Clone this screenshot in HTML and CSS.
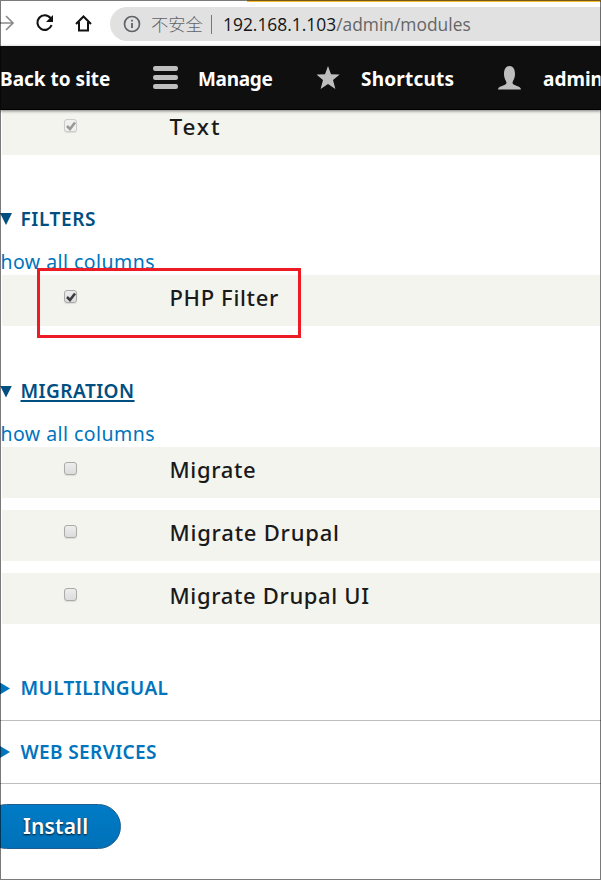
FILE: index.html
```
<!DOCTYPE html>
<html lang="en">
<head>
<meta charset="utf-8">
<title>Extend</title>
<link rel="stylesheet" href="styles.css">
</head>
<body>
<div class="window">
  <header class="browser">
    <svg class="nav-icons" width="110" height="45" viewBox="0 0 110 45" fill="none">
      <path d="M0 23H13M6 16L13 23L6 30" stroke="#8b8b8b" stroke-width="1.7"/>
      <path d="M50.5 18.1A7.300 7.300 0 1 0 51.6 25" stroke="#111" stroke-width="2.1"/>
      <path d="M53 15V22H46Z" fill="#111"/>
      <path d="M76 24L83.500 16.500L91 24M79 22V30.500H88V22" stroke="#111" stroke-width="2"/>
    </svg>
    <div class="address">
      <svg class="info" width="18" height="18" viewBox="0 0 18 18" fill="none" stroke="#5f6368">
        <circle cx="9" cy="9" r="7.500" stroke-width="1.700"/>
        <path d="M9 8V13M9 4.700V6.500" stroke-width="1.800"/>
      </svg>
      <span class="insecure">不安全</span>
      <span class="divider"></span>
      <span class="url">192.168.1.103<span class="path">/admin/modules</span></span>
    </div>
  </header>
  <nav class="toolbar">
    <span class="tab back">Back to site</span>
    <svg class="menu-icon" width="26" height="24" viewBox="0 0 26 24" fill="#bebebe"><rect width="25" height="5" rx="2.200"/><rect y="9" width="25" height="5" rx="2.200"/><rect y="18" width="25" height="5" rx="2.200"/></svg>
    <span class="tab manage">Manage</span>
    <svg class="star-icon" width="24" height="24" viewBox="0 0 24 24" fill="#bebebe"><path d="M11 0L14 8.200L22.700 8.500L16 14L18.400 23L11 18L3.600 23L6 14L-.7 8.500L8 8.200Z"/></svg>
    <span class="tab shortcuts">Shortcuts</span>
    <svg class="user-icon" width="24" height="24" viewBox="0 0 24 24" fill="#bebebe"><path d="M0 23.500C0 19.500 8 20 8.500 17C8.500 15 6 13 6 8C6 3 8 0 11.500 0S17 3 17 8C17 13 14.500 15 14.500 17C15 20 23 19.500 23 23.500Z"/></svg>
    <span class="tab admin">admin</span>
  </nav>
  <main>
    <div class="row first"><span class="check checked disabled"><svg width="14" height="14" viewBox="0 0 14 14"><path d="M3 7L6 10L11 3.500"/></svg></span><span class="name n-text">Text</span></div>
    <section class="group">
      <h2 class="open"><i class="tri down"></i><span class="t-filters">FILTERS</span></h2>
      <a class="columns">how all columns</a>
      <div class="row"><span class="check checked"><svg width="14" height="14" viewBox="0 0 14 14"><path d="M3 7L6 10L11 3.500"/></svg></span><span class="name n-php">PHP Filter</span></div>
      <div class="highlight"></div>
    </section>
    <section class="group second">
      <h2 class="open"><i class="tri down"></i><span class="t-migration">MIGRATION</span></h2>
      <a class="columns">how all columns</a>
      <div class="rows">
        <div class="row"><span class="check"></span><span class="name">Migrate</span></div>
        <div class="row"><span class="check"></span><span class="name n-drupal">Migrate Drupal</span></div>
        <div class="row"><span class="check"></span><span class="name">Migrate Drupal UI</span></div>
      </div>
    </section>
    <h2 class="closed ml"><i class="tri right"></i><span class="t-multi">MULTILINGUAL</span></h2>
    <h2 class="closed"><i class="tri right"></i><span class="t-web">WEB SERVICES</span></h2>
    <button class="install">Install</button>
  </main>
</div>
</body>
</html>
```
FILE: styles.css
```
* { box-sizing: border-box; }
body { margin: 0; }
.window { position: relative; width: 601px; height: 880px; overflow: hidden; background: #fff; font-family: "Noto Sans", sans-serif; }
.window::after { content: ""; position: absolute; inset: 0; border: 1px solid rgba(0,0,0,.52); z-index: 5; }
.window::before { content: ""; position: absolute; left: 247px; right: 0; top: 0; height: 2px; background: #f3bd36; z-index: 4; }
.browser { height: 46px; display: flex; }
.nav-icons { flex: none; }
.address { flex: 1; height: 34px; margin-top: 7px; background: #e1e1e1; border-radius: 17px 0 0 17px; display: flex; align-items: center; padding-left: 13px; white-space: nowrap; }
.info { flex: none; }
.insecure { width: 52px; margin-left: 10px; font: 300 17.3px/34px "Noto Sans CJK SC", sans-serif; color: #5f6368; }
.divider { width: 1px; height: 19px; margin: 0 11px 0 8px; background: #777; }
.url { font: 17.4px/34px "Open Sans", sans-serif; color: #151515; }
.path { color: #666; }
.toolbar { position: relative; z-index: 2; height: 64px; background: #0f0f0f; border-bottom: 1px solid #000; display: flex; align-items: center; box-shadow: 0 1px 3px rgba(0,0,0,.5); color: #fff; font-size: 19px; font-weight: 700; white-space: nowrap; }
.toolbar svg { flex: none; }
.tab { flex: none; line-height: 28px; padding-top: 2px; }
.back { width: 153px; }
.manage { margin-left: 19px; width: 119px; letter-spacing: -.3px; }
.shortcuts { margin-left: 20px; width: 137px; letter-spacing: .2px; }
.admin { margin-left: 21px; }
.row { height: 51px; background: #f3f4ee; display: flex; margin: 0 1px 0 2px; padding-left: 62px; }
.row.first { height: 45px; }
.first .check { margin-top: 9px; }
.first .name { font-size: 22.500px; line-height: 33px; letter-spacing: 1.9px; }
.check { flex: none; width: 13px; height: 13px; margin: 15px 92.500px 0 0; border: 1px solid #aaa; border-radius: 3px; background: linear-gradient(#ededed, #dcdcdc); box-shadow: 0 1px 1px rgba(0,0,0,.1); }
.check svg { display: block; margin: -1px; }
.check path { fill: none; stroke: #3d3d3d; stroke-width: 2.6; }
.check.disabled { border-color: #ccc; background: #f1f1ee; }
.disabled path { stroke: #999; }
.name { color: #1a1a1a; font-size: 22px; font-weight: 500; line-height: 44px; letter-spacing: .65px; white-space: nowrap; }
.n-drupal { letter-spacing: .78px; }
.group { position: relative; padding-top: 46px; }
.group h2 { height: 36px; margin: 0; }
.second { padding-top: 47px; }
h2 { display: flex; align-items: center; font-size: 19px; font-weight: 600; color: #004f80; white-space: nowrap; }
h2 span { line-height: 25px; letter-spacing: .4px; }
.t-filters { letter-spacing: .6px; }
.t-migration { letter-spacing: .45px; text-decoration: underline; text-decoration-thickness: 2px; text-underline-offset: 2px; text-decoration-skip-ink: none; }
.tri { flex: none; height: 12px; }
.down { width: 12px; margin-right: 8.500px; background: #004f80; clip-path: polygon(0 0, 100% 0, 50% 100%); }
.right { width: 10px; margin-right: 10.500px; background: #0074bd; clip-path: polygon(0 0, 100% 50%, 0 100%); }
.columns { display: block; height: 38px; padding-left: .5px; line-height: 50px; font-size: 19.5px; color: #0074bd; letter-spacing: .45px; white-space: nowrap; }
.second .columns { line-height: 49px; }
.second h2 { padding-top: 1px; }
.rows { display: grid; gap: 12px; }
.highlight { position: absolute; left: 37px; top: 113px; width: 264px; height: 70px; border: 3px solid #ed1c24; }
.closed { height: 63px; margin: 0; border-bottom: 1px solid #bebebe; color: #0074bd; }
.ml { margin-top: 33px; height: 64px; }
.install { display: block; width: 137px; height: 45px; margin: 20px 0 0 -16px; padding: 0 0 0 38px; border: 1px solid #1e5c90; border-radius: 23px; background: linear-gradient(#007bc6, #0071b8); color: #fff; font: 600 21px/41px "Noto Sans", sans-serif; letter-spacing: .15px; text-align: left; text-shadow: 0 1px 2px rgba(0,0,0,.8); }
```
